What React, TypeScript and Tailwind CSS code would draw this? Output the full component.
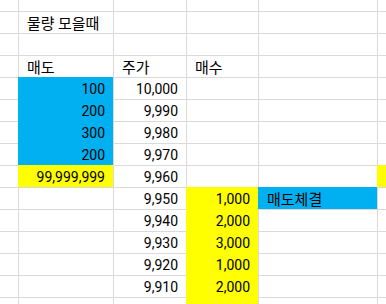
type Fill = "blue" | "yellow" | undefined;
type Cell = { t?: string; r?: boolean; f?: Fill };

const E: Cell = {};

// 6 columns: A (narrow), B 매도, C 주가, D 매수, E, F (cut off)
const ROWS: Cell[][] = [
  [E, E, E, E, E, E],
  [E, { t: "물량 모을때" }, E, E, E, E],
  [E, E, E, E, E, E],
  [E, { t: "매도" }, { t: "주가" }, { t: "매수" }, E, E],
  [E, { t: "100", r: true, f: "blue" }, { t: "10,000", r: true }, E, E, E],
  [E, { t: "200", r: true, f: "blue" }, { t: "9,990", r: true }, E, E, E],
  [E, { t: "300", r: true, f: "blue" }, { t: "9,980", r: true }, E, E, E],
  [E, { t: "200", r: true, f: "blue" }, { t: "9,970", r: true }, E, E, E],
  [E, { t: "99,999,999", r: true, f: "yellow" }, { t: "9,960", r: true }, E, E, { f: "yellow" }],
  [E, E, { t: "9,950", r: true }, { t: "1,000", r: true, f: "yellow" }, { t: "매도체결", f: "blue" }, E],
  [E, E, { t: "9,940", r: true }, { t: "2,000", r: true, f: "yellow" }, E, E],
  [E, E, { t: "9,930", r: true }, { t: "3,000", r: true, f: "yellow" }, E, E],
  [E, E, { t: "9,920", r: true }, { t: "1,000", r: true, f: "yellow" }, E, E],
  [E, E, { t: "9,910", r: true }, { t: "2,000", r: true, f: "yellow" }, E, E],
  [E, E, E, { f: "yellow" }, E, E],
];

function fillClass(f: Fill) {
  if (f === "blue") return "bg-[#00b0f0] border-[#00b0f0]";
  if (f === "yellow") return "bg-[#ffff00] border-[#ffff00]";
  return "bg-white border-[#dadada]";
}

export default function App() {
  return (
    <div className="w-[386px] h-[304px] overflow-hidden bg-white text-black">
      <div className="grid grid-cols-[18px_95px_73px_72px_119px_20px] grid-rows-[11px_repeat(14,22px)]">
        {ROWS.map((row, ri) =>
          row.map((c, ci) => {
            const isNum = c.r;
            return (
              <div
                key={`${ri}-${ci}`}
                className={`flex items-center overflow-visible whitespace-nowrap border-l border-t px-[8px] ${
                  ci === 0 ? "border-l-0" : ""
                } ${ri === 0 ? "border-t-0" : ""} ${isNum ? "justify-end" : "justify-start"} ${fillClass(c.f)}`}
              >
                {c.t && (
                  <span
                    className={
                      isNum
                        ? "font-['Roboto','Noto_Sans_CJK_KR',sans-serif] text-[14px] leading-none"
                        : "font-['Noto_Sans_CJK_KR',sans-serif] text-[15px] leading-none"
                    }
                  >
                    {c.t}
                  </span>
                )}
              </div>
            );
          })
        )}
      </div>
    </div>
  );
}
